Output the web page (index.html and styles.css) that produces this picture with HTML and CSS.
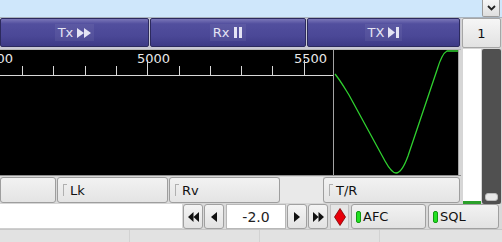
FILE: index.html
```html
<!DOCTYPE html>
<html lang="en">

<head>
    <meta charset="UTF-8">
    <title>Modem panel</title>
    <link rel="stylesheet" href="styles.css">
</head>

<body>
    <div class="topbar">
        <button class="drop">
            <svg width="9" height="6" viewBox="0 0 9 6"><path d="M1 1 L4.5 4.5 L8 1" fill="none" stroke="#222" stroke-width="1.8"/></svg>
        </button>
    </div>

    <div class="main">
        <div class="left">
            <div class="modes">
                <button class="mode w1"><span class="cap">Tx <svg width="14" height="10" viewBox="0 0 14 10"><path d="M0 0 L7 5 L0 10 Z M7 0 L14 5 L7 10 Z" fill="#e4e4f4"/></svg></span></button>
                <button class="mode w2"><span class="cap">Rx <svg width="10" height="11" viewBox="0 0 10 11"><rect x="1" y="0" width="3" height="11" fill="#e4e4f4"/><rect x="6" y="0" width="3" height="11" fill="#e4e4f4"/></svg></span></button>
                <button class="mode w3"><span class="cap">TX <svg width="11" height="11" viewBox="0 0 11 11"><path d="M0 0 L7 5.5 L0 11 Z" fill="#e4e4f4"/><rect x="8" y="0" width="3" height="11" fill="#e4e4f4"/></svg></span></button>
            </div>

            <div class="display">
                <div class="waterfall">
                    <svg width="333" height="126" viewBox="0 0 333 126">
                        <g fill="#e8e8e8" font-family="DejaVu Sans, sans-serif" font-size="13">
                            <text x="-20" y="13">4500</text>
                            <text x="137" y="13">5000</text>
                            <text x="294" y="13">5500</text>
                        </g>
                        <g stroke="#d8d8d8" stroke-width="1">
                            <line x1="0" y1="25.5" x2="333" y2="25.5"/>
                            <line x1="22.5" y1="16" x2="22.5" y2="25"/>
                            <line x1="53.5" y1="16" x2="53.5" y2="25"/>
                            <line x1="85.5" y1="16" x2="85.5" y2="25"/>
                            <line x1="116.5" y1="16" x2="116.5" y2="25"/>
                            <line x1="147.5" y1="10" x2="147.5" y2="25"/>
                            <line x1="179.5" y1="16" x2="179.5" y2="25"/>
                            <line x1="210.5" y1="16" x2="210.5" y2="25"/>
                            <line x1="241.5" y1="16" x2="241.5" y2="25"/>
                            <line x1="272.5" y1="16" x2="272.5" y2="25"/>
                            <line x1="304.5" y1="10" x2="304.5" y2="25"/>
                        </g>
                    </svg>
                </div>
                <div class="scope">
                    <svg width="124" height="126" viewBox="0 0 124 126">
                        <path d="M1 24 C6 30 10 37 15 45 L51 111 C56 120 59 123 62 123 C66 123 70 117 74 106 L103 20 C106 10 109 3 113 1 L124 1" fill="none" stroke="#2fd12f" stroke-width="1.3"/>
                    </svg>
                </div>
            </div>

            <div class="toggles">
                <button class="tog t0"></button>
                <button class="tog t1"><i class="lamp"></i>Lk</button>
                <button class="tog t2"><i class="lamp"></i>Rv</button>
                <span class="tog-gap"></span>
                <button class="tog t3"><i class="lamp"></i>T/R</button>
            </div>
        </div>

        <div class="right">
            <button class="chan">1</button>
            <div class="levels">
                <div class="meter"><span class="meter-fill"></span></div>
                <div class="squelch"><span class="thumb"></span></div>
            </div>
        </div>
    </div>

    <div class="ctrlrow">
        <div class="entry"></div>
        <button class="nav"><svg width="11" height="10" viewBox="0 0 11 10"><path d="M5.5 0 L0 5 L5.5 10 Z M11 0 L5.5 5 L11 10 Z" fill="#111"/></svg></button>
        <button class="nav"><svg width="6" height="10" viewBox="0 0 6 10"><path d="M6 0 L0 5 L6 10 Z" fill="#111"/></svg></button>
        <div class="offset">-2.0</div>
        <button class="nav"><svg width="6" height="10" viewBox="0 0 6 10"><path d="M0 0 L6 5 L0 10 Z" fill="#111"/></svg></button>
        <button class="nav"><svg width="11" height="10" viewBox="0 0 11 10"><path d="M0 0 L5.5 5 L0 10 Z M5.5 0 L11 5 L5.5 10 Z" fill="#111"/></svg></button>
        <button class="stop"><svg width="12" height="18" viewBox="0 0 12 18"><path d="M6 0.5 L11.5 9 L6 17.5 L0.5 9 Z" fill="#e8000a" stroke="#7a0000" stroke-width="0.8"/></svg></button>
        <button class="flag afc"><i class="led"></i>AFC</button>
        <button class="flag sql"><i class="led"></i>SQL</button>
    </div>

    <div class="status">
        <span class="cell c1"></span>
        <span class="cell c2"></span>
        <span class="cell c3"></span>
        <span class="cell c4"></span>
    </div>
</body>

</html>
```

FILE: styles.css
```css
* {
    margin: 0;
    padding: 0;
    box-sizing: border-box;
}

body {
    width: 502px;
    height: 242px;
    overflow: hidden;
    background: #d6d6d6;
    font-family: 'DejaVu Sans', sans-serif;
    font-size: 13px;
    color: #111;
}

button {
    font-family: inherit;
    font-size: 13px;
    color: #111;
}

/* top strip */

.topbar {
    height: 18px;
    background: #cfe7fb;
    border-bottom: 1px solid #a9b3bd;
    display: flex;
    justify-content: flex-end;
    padding-right: 2px;
}

.drop {
    width: 18px;
    height: 17px;
    background: linear-gradient(#f6f6f6, #dedede);
    border: 1px solid #9c9c9c;
    border-top: none;
    border-radius: 0 0 2px 2px;
    display: flex;
    align-items: center;
    justify-content: center;
}

.main {
    display: flex;
}

.left {
    width: 461px;
    display: flex;
    flex-direction: column;
}

/* mode buttons */

.modes {
    height: 31px;
    display: flex;
    background: #c9c9d4;
    padding: 0 0 2px;
}

.mode {
    height: 29px;
    border: 1px solid #2c2a5e;
    border-radius: 2px;
    background: linear-gradient(#7a76b8, #524f9e 18%, #4a4796 65%, #3d3a86);
    display: flex;
    align-items: center;
    justify-content: center;
    color: #e4e4f4;
}

.w1 {
    width: 149px;
    margin-right: 1px;
}

.w2 {
    width: 156px;
    margin-right: 1px;
}

.w3 {
    width: 153px;
}

.cap {
    display: flex;
    align-items: center;
    gap: 4px;
    padding: 1px 3px;
    background: rgba(255, 255, 255, 0.06);
}

/* waterfall + scope */

.display {
    height: 127px;
    display: flex;
    border-top: 1px solid #b4b4b4;
    border-bottom: 1px solid #8e8e8e;
}

.waterfall {
    width: 334px;
    background: #000;
    border-right: 1px solid #a4a4a4;
}

.waterfall svg,
.scope svg {
    display: block;
}

.scope {
    width: 125px;
    background: #000;
    border-right: 1px solid #a4a4a4;
}

/* light buttons under the waterfall */

.toggles {
    height: 27px;
    display: flex;
    align-items: flex-end;
    background: #d9d9d9;
}

.tog {
    height: 26px;
    background: linear-gradient(#f2f2f2, #e4e4e4);
    border: 1px solid #9e9e9e;
    border-radius: 3px;
    display: flex;
    align-items: center;
    padding-left: 5px;
    gap: 3px;
}

.t0 {
    width: 56px;
    margin-right: 1px;
}

.t1 {
    width: 111px;
}

.t2 {
    width: 111px;
    margin-left: 1px;
}

.tog-gap {
    width: 43px;
    height: 26px;
    background: #e9e9e9;
}

.t3 {
    width: 137px;
}

.lamp {
    width: 4px;
    height: 12px;
    border-top: 1px solid #b0b0b0;
    border-left: 1px solid #b0b0b0;
}

/* right column */

.right {
    width: 41px;
    display: flex;
    flex-direction: column;
    padding-left: 1px;
}

.chan {
    width: 39px;
    height: 30px;
    background: linear-gradient(#f6f6f6, #e2e2e2);
    border: 1px solid #a6a6a6;
    border-radius: 2px;
    margin-bottom: 1px;
}

.levels {
    height: 155px;
    display: flex;
    gap: 1px;
    padding-left: 1px;
}

.meter {
    width: 18px;
    background: #fff;
    border-bottom: 3px solid #2aa02a;
}

.squelch {
    width: 19px;
    background: #505050;
    border-radius: 2px;
    display: flex;
    align-items: flex-end;
    justify-content: center;
    padding-bottom: 3px;
}

.thumb {
    width: 13px;
    height: 8px;
    background: #e8e8e8;
    border: 1px solid #bcbcbc;
    border-radius: 3px;
}

/* frequency control row */

.ctrlrow {
    height: 25px;
    display: flex;
    background: #d9d9d9;
}

.entry {
    width: 182px;
    background: #fff;
    border-bottom: 1px solid #cfcfcf;
}

.nav {
    width: 20px;
    height: 25px;
    margin-left: 1px;
    background: linear-gradient(#f4f4f4, #e2e2e2);
    border: 1px solid #a0a0a0;
    border-radius: 3px;
    display: flex;
    align-items: center;
    justify-content: center;
}

.offset {
    width: 60px;
    margin-left: 2px;
    background: #fff;
    border: 1px solid #b8b8b8;
    font-size: 14px;
    display: flex;
    align-items: center;
    justify-content: center;
    color: #222;
}

.stop {
    width: 19px;
    height: 25px;
    margin-left: 2px;
    background: #e6e6e6;
    border: 1px solid #c2c2c2;
    display: flex;
    align-items: center;
    justify-content: center;
}

.flag {
    height: 25px;
    margin-left: 2px;
    background: linear-gradient(#f2f2f2, #e2e2e2);
    border: 1px solid #a0a0a0;
    border-radius: 3px;
    display: flex;
    align-items: center;
    gap: 2px;
    padding-left: 4px;
}

.afc {
    width: 75px;
}

.sql {
    width: 71px;
}

.led {
    width: 5px;
    height: 12px;
    background: #22e022;
    border: 1px solid #119911;
    border-radius: 2px;
}

/* status strip */

.status {
    height: 14px;
    display: flex;
    background: #e2e2e2;
    border-top: 1px solid #c6c6c6;
}

.cell {
    border-right: 1px solid #d2d2d2;
}

.c1 {
    width: 130px;
}

.c2 {
    width: 130px;
}

.c3 {
    width: 120px;
}

.c4 {
    flex: 1;
    border-right: none;
}
```
